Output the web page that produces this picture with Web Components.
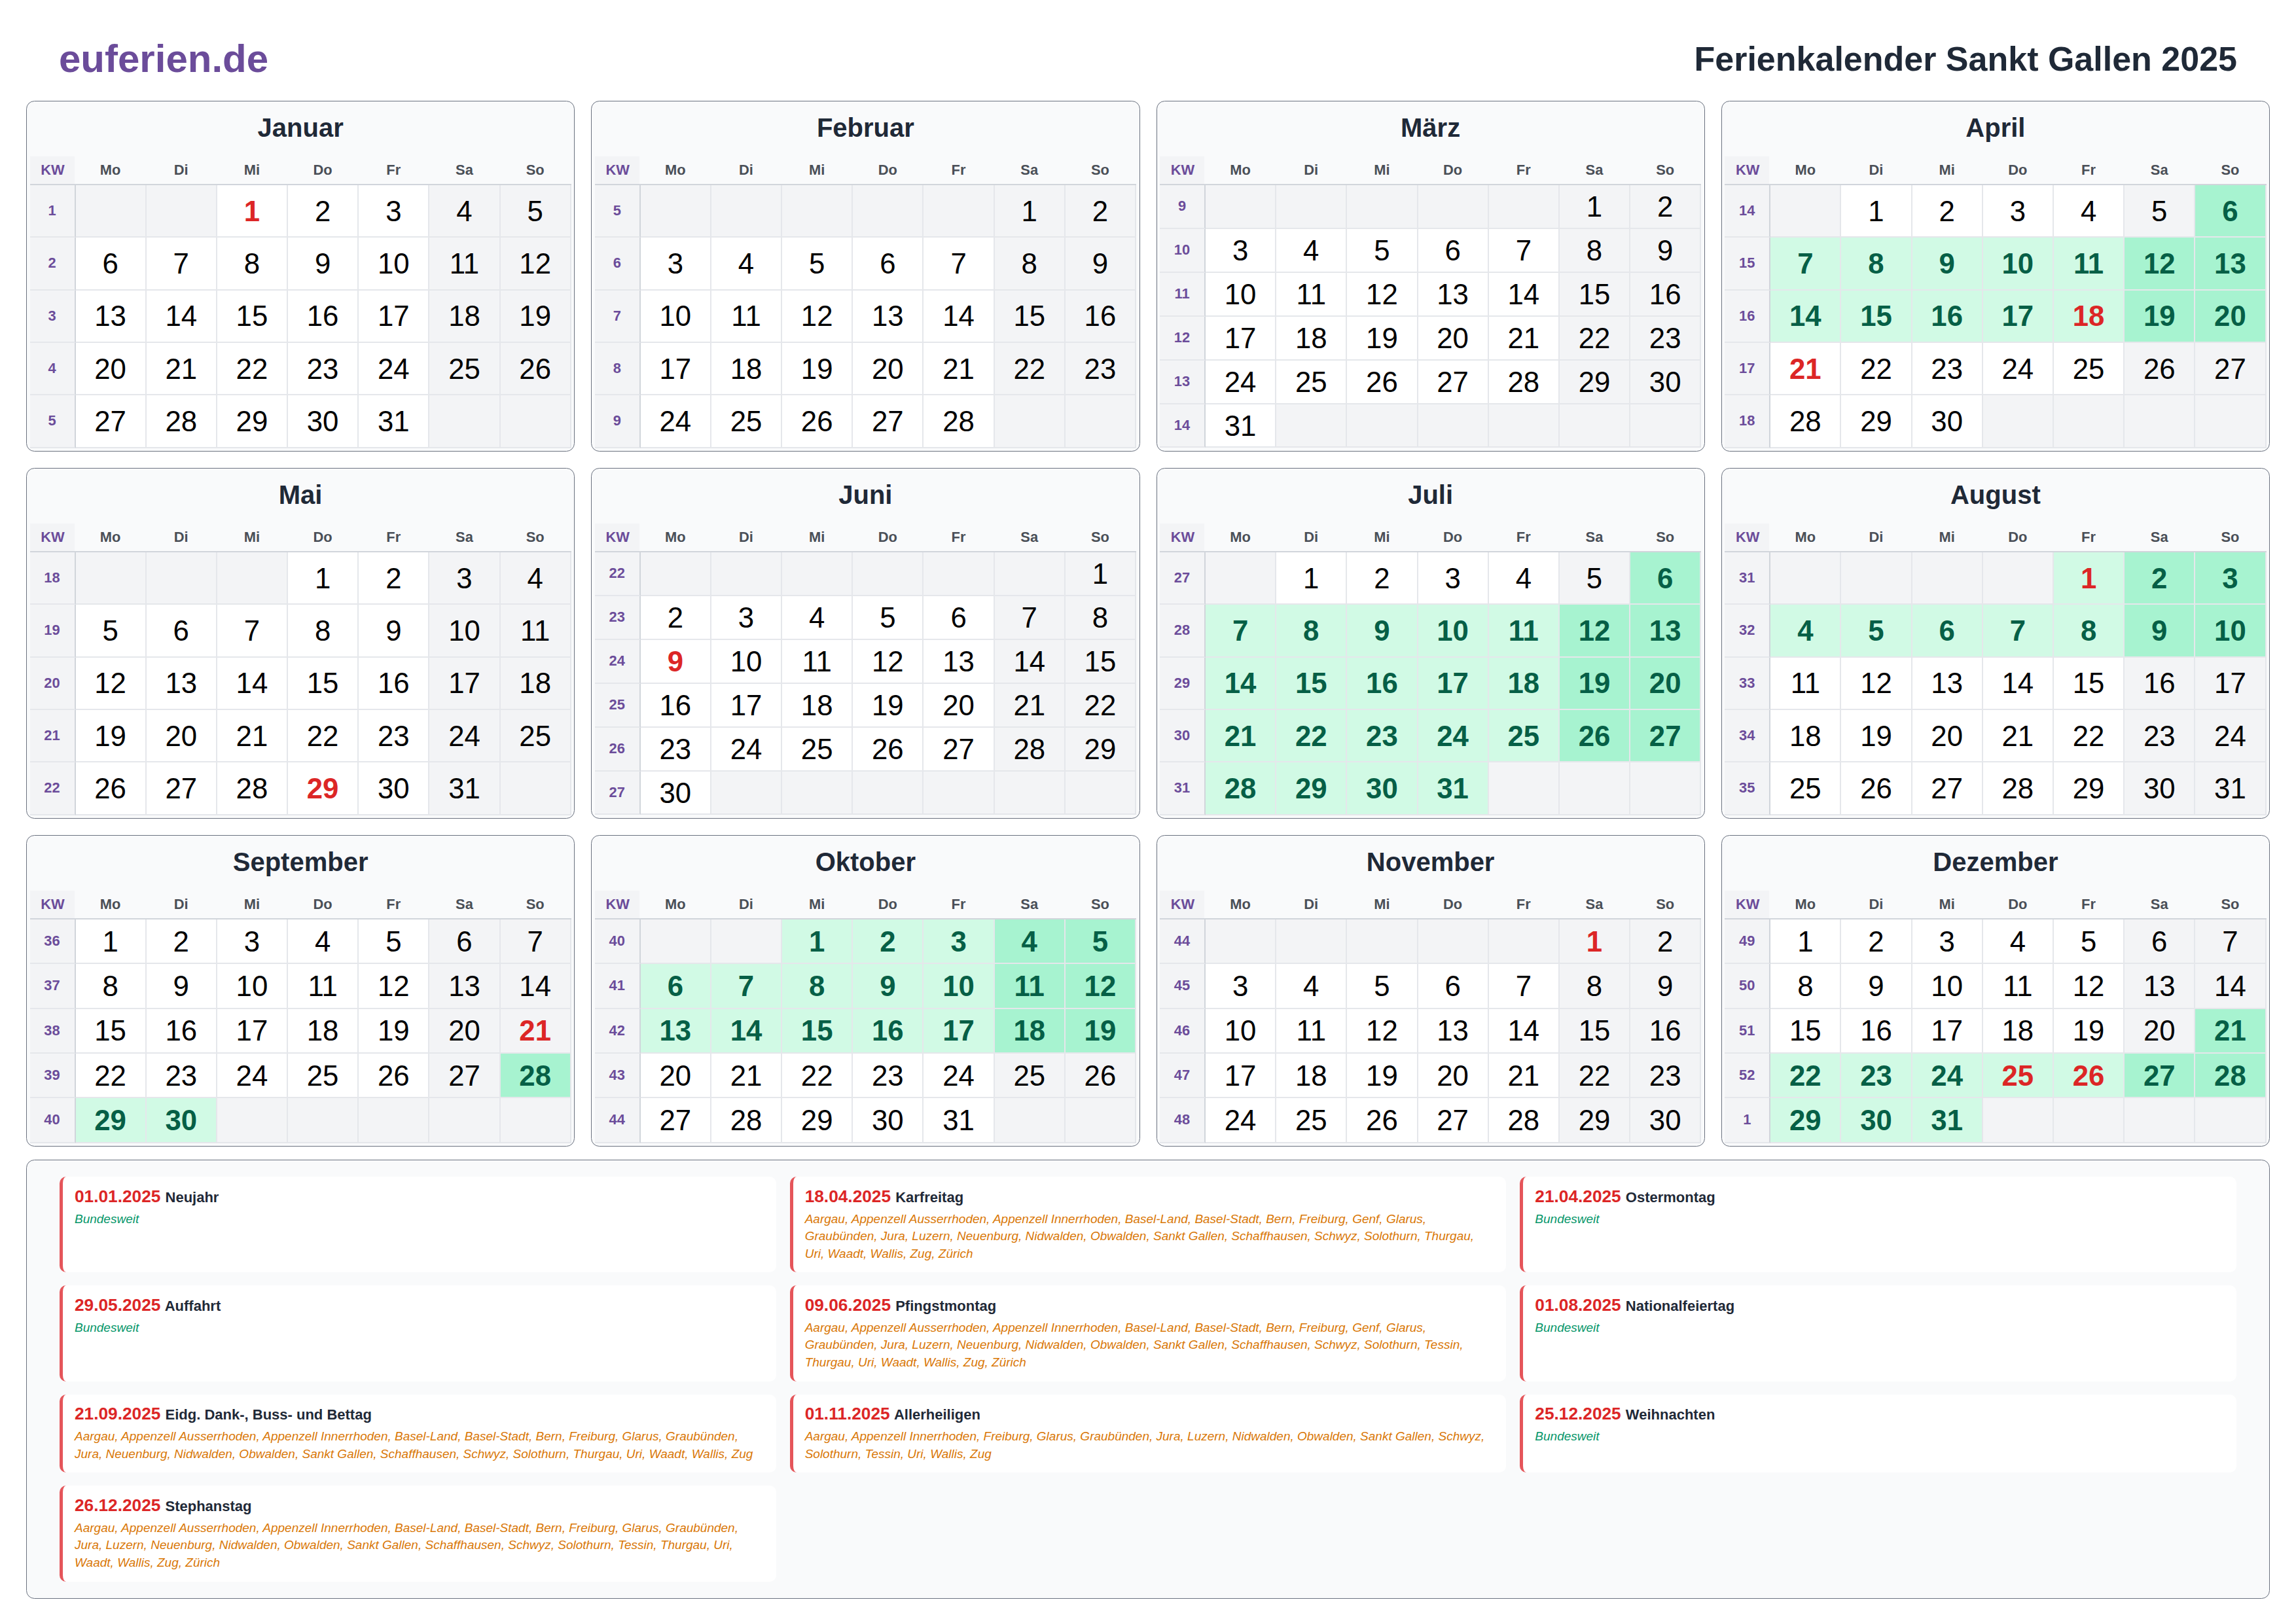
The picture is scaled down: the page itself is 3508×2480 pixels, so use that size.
<!DOCTYPE html>
<html lang="de">
<head>
<meta charset="utf-8">
<title>Ferienkalender Sankt Gallen 2025</title>
<style>
  html, body { margin: 0; padding: 0; background: #fff; }
  body { font-family: "Liberation Sans", Arial, sans-serif; }
</style>
</head>
<body>
<calendar-page></calendar-page>
<script>
const WD = ['Mo','Di','Mi','Do','Fr','Sa','So'];

class MonthCard extends HTMLElement {
  set data(d) { this._d = d; this.render(); }
  render() {
    const d = this._d;
    const root = this.shadowRoot || this.attachShadow({mode:'open'});
    const rows = d.kw.length;
    const cells = [];
    cells.push('<div class="h k">KW</div>');
    WD.forEach(w => cells.push(`<div class="h">${w}</div>`));
    let day = 1 - d.off;
    for (let r = 0; r < rows; r++) {
      cells.push(`<div class="kw">${d.kw[r]}</div>`);
      for (let c = 0; c < 7; c++, day++) {
        const valid = day >= 1 && day <= d.days;
        const we = c >= 5;
        let cls = 'c';
        if (!valid) cls += ' off';
        else {
          const fer = d.fer && day >= d.fer[0] && day <= d.fer[1];
          const hol = d.hol && d.hol.includes(day);
          if (fer) cls += we ? ' fw' : ' fd';
          else if (we) cls += ' off';
          if (hol) cls += ' hol';
        }
        cells.push(`<div class="${cls}">${valid ? day : ''}</div>`);
      }
    }
    root.innerHTML = `<style>
      :host { display: flex; flex-direction: column; box-sizing: border-box; min-width: 0;
        border: 1px solid #6b7280; border-radius: 12.5px; background: #f9fafb; padding: 0 4.5px 4.5px; }
      h2 { margin: 0; height: 84px; box-sizing: border-box; padding-bottom: 4px; display: flex; align-items: center; justify-content: center;
        font: bold 40px "Liberation Sans", Arial, sans-serif; color: #1f2937; }
      .g { flex: 1; display: grid; grid-template-columns: 70px repeat(7, 1fr);
        grid-template-rows: 44px repeat(${rows}, 1fr); min-height: 0; }
      .h { display: flex; align-items: center; justify-content: center; box-sizing: border-box;
        font: bold 21.875px "Liberation Sans", Arial, sans-serif; color: #4a4f57;
        border-bottom: 2px solid #d1d5db; padding-right: 2px; }
      .h.k { color: #6b4c9a; background: linear-gradient(to right, #f3f4f6 calc(100% - 2px), #f9fafb calc(100% - 2px)); padding-right: 0; }
      .kw { display: flex; align-items: center; justify-content: center; box-sizing: border-box;
        font: bold 21.875px "Liberation Sans", Arial, sans-serif; color: #6b4c9a; background: #f3f4f6;
        border-right: 2px solid #d1d5db; border-bottom: 2px solid #e5e7eb; }
      .c { display: flex; align-items: center; justify-content: center; box-sizing: border-box;
        font: 43.75px "Liberation Sans", Arial, sans-serif; color: #000; background: #fff;
        border-right: 2px solid #e5e7eb; border-bottom: 2px solid #e5e7eb; padding-top: 1px; }
      .off { background: #f3f4f6; }
      .fd { background: #d1fae5; color: #065f46; font-weight: bold; }
      .fw { background: #a7f3d0; color: #065f46; font-weight: bold; }
      .hol { color: #dc2626; font-weight: bold; }
    </style><h2>${d.name}</h2><div class="g">${cells.join('')}</div>`;
  }
}
customElements.define('month-card', MonthCard);

class HolidayItem extends HTMLElement {
  connectedCallback() {
    if (this.shadowRoot) return;
    const all = this.getAttribute('regions') === 'Bundesweit';
    const root = this.attachShadow({mode:'open'});
    root.innerHTML = `<style>
      :host { display: block; box-sizing: border-box; background: #fff; border-left: 5px solid #e5555a;
        border-radius: 10px; padding: 16.5px 22px 15px 18px; min-width: 0; }
      .t { font: bold 22px/30px "Liberation Sans", Arial, sans-serif; color: #1f2937; margin-bottom: 5px; }
      .d { color: #dc2626; font-size: 26.25px; line-height: 1; margin-right: 1px; }
      .r { font: italic 19px/26.6px "Liberation Sans", Arial, sans-serif; color: ${all ? '#059669' : '#d97706'}; }
    </style><div class="t"><span class="d">${this.getAttribute('date')}</span> ${this.getAttribute('name')}</div>
    <div class="r">${this.getAttribute('regions')}</div>`;
  }
}
customElements.define('holiday-item', HolidayItem);

class HolidayList extends HTMLElement {
  constructor() {
    super();
    this.attachShadow({mode:'open'}).innerHTML = `<style>
      :host { display: grid; box-sizing: border-box; grid-template-columns: repeat(3, 1fr); gap: 20px 21px;
        align-items: stretch; padding: 25px 50px; border: 1px solid #6b7280; border-radius: 12.5px; background: #f9fafb; }
    </style><slot></slot>`;
  }
}
customElements.define('holiday-list', HolidayList);

class PageHeader extends HTMLElement {
  constructor() {
    super();
    this.attachShadow({mode:'open'}).innerHTML = `<style>
      :host { display: flex; justify-content: space-between; align-items: center; height: 69px; padding: 55px 50px 30px; }
      .logo { font: bold 60px "Liberation Sans", Arial, sans-serif; color: #6b4c9a; }
      .title { font: bold 52px "Liberation Sans", Arial, sans-serif; color: #1f2937; }
    </style><div class="logo"><slot name="logo"></slot></div><div class="title"><slot name="title"></slot></div>`;
  }
}
customElements.define('page-header', PageHeader);

const BUND = 'Bundesweit';
const R1 = 'Aargau, Appenzell Ausserrhoden, Appenzell Innerrhoden, Basel-Land, Basel-Stadt, Bern, Freiburg, Genf, Glarus, Graubünden, Jura, Luzern, Neuenburg, Nidwalden, Obwalden, Sankt Gallen, Schaffhausen, Schwyz, Solothurn, ';
const HOL = [
  ['01.01.2025','Neujahr',BUND],
  ['18.04.2025','Karfreitag',R1+'Thurgau, Uri, Waadt, Wallis, Zug, Zürich'],
  ['21.04.2025','Ostermontag',BUND],
  ['29.05.2025','Auffahrt',BUND],
  ['09.06.2025','Pfingstmontag',R1+'Tessin, Thurgau, Uri, Waadt, Wallis, Zug, Zürich'],
  ['01.08.2025','Nationalfeiertag',BUND],
  ['21.09.2025','Eidg. Dank-, Buss- und Bettag','Aargau, Appenzell Ausserrhoden, Appenzell Innerrhoden, Basel-Land, Basel-Stadt, Bern, Freiburg, Glarus, Graubünden, Jura, Neuenburg, Nidwalden, Obwalden, Sankt Gallen, Schaffhausen, Schwyz, Solothurn, Thurgau, Uri, Waadt, Wallis, Zug'],
  ['01.11.2025','Allerheiligen','Aargau, Appenzell Innerrhoden, Freiburg, Glarus, Graubünden, Jura, Luzern, Nidwalden, Obwalden, Sankt Gallen, Schwyz, Solothurn, Tessin, Uri, Wallis, Zug'],
  ['25.12.2025','Weihnachten',BUND],
  ['26.12.2025','Stephanstag','Aargau, Appenzell Ausserrhoden, Appenzell Innerrhoden, Basel-Land, Basel-Stadt, Bern, Freiburg, Glarus, Graubünden, Jura, Luzern, Neuenburg, Nidwalden, Obwalden, Sankt Gallen, Schaffhausen, Schwyz, Solothurn, Tessin, Thurgau, Uri, Waadt, Wallis, Zug, Zürich'],
];
const range = (a,b) => { const r=[]; for(let i=a;i<=b;i++) r.push(i); return r; };
const MONTHS = [
  {name:'Januar',off:2,days:31,kw:range(1,5),hol:[1]},
  {name:'Februar',off:5,days:28,kw:range(5,9)},
  {name:'März',off:5,days:31,kw:range(9,14)},
  {name:'April',off:1,days:30,kw:range(14,18),hol:[18,21],fer:[6,20]},
  {name:'Mai',off:3,days:31,kw:range(18,22),hol:[29]},
  {name:'Juni',off:6,days:30,kw:range(22,27),hol:[9]},
  {name:'Juli',off:1,days:31,kw:range(27,31),fer:[6,31]},
  {name:'August',off:4,days:31,kw:range(31,35),hol:[1],fer:[1,10]},
  {name:'September',off:0,days:30,kw:range(36,40),hol:[21],fer:[28,30]},
  {name:'Oktober',off:2,days:31,kw:range(40,44),fer:[1,19]},
  {name:'November',off:5,days:30,kw:range(44,48),hol:[1]},
  {name:'Dezember',off:0,days:31,kw:[49,50,51,52,1],hol:[25,26],fer:[21,31]},
];

class CalendarPage extends HTMLElement {
  constructor() {
    super();
    const root = this.attachShadow({mode:'open'});
    root.innerHTML = `<style>
      :host { display: block; box-sizing: border-box; width: 3508px; height: 2480px; padding: 0 40px; overflow: hidden;
        font-family: "Liberation Sans", Arial, sans-serif; }
      .months { display: grid; grid-template-columns: repeat(4, 1fr); grid-template-rows: 536px 536px 476px; gap: 25px; margin-bottom: 20px; }
    </style>
    <page-header><span slot="logo">euferien.de</span><span slot="title">Ferienkalender Sankt Gallen 2025</span></page-header>
    <div class="months"></div>
    <holiday-list></holiday-list>`;
    const m = root.querySelector('.months');
    MONTHS.forEach(d => { const c = document.createElement('month-card'); c.data = d; m.appendChild(c); });
    const l = root.querySelector('holiday-list');
    HOL.forEach(h => { const i = document.createElement('holiday-item');
      i.setAttribute('date',h[0]); i.setAttribute('name',h[1]); i.setAttribute('regions',h[2]); l.appendChild(i); });
  }
}
customElements.define('calendar-page', CalendarPage);
</script>
</body>
</html>
